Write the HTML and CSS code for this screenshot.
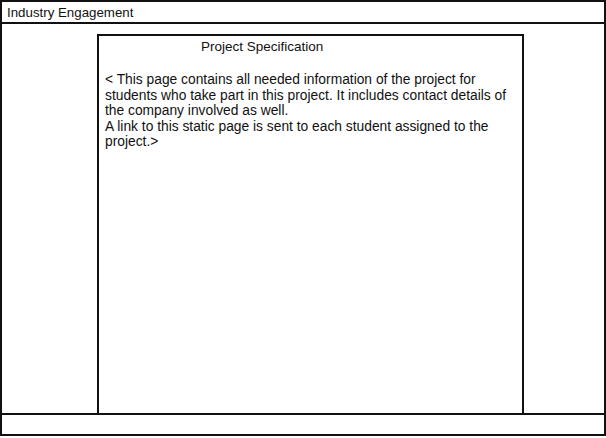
FILE: index.html
```html
<!DOCTYPE html>
<html>
<head>
<meta charset="utf-8">
<link rel="stylesheet" href="styles.css">
</head>
<body>
<div class="frame">
  <div class="header">Industry Engagement</div>
  <div class="main">
    <div class="panel">
      <div class="title">Project Specification</div>
      <p class="desc">&lt; This page contains all needed information of the project for students who take part in this project. It includes contact details of the company involved as well.<br>A link to this static page is sent to each student assigned to the project.&gt;</p>
    </div>
  </div>
  <div class="footer"></div>
</div>
</body>
</html>
```
FILE: styles.css
```css
html, body {
  margin: 0;
  padding: 0;
  background: #fff;
}
body {
  font-family: "Liberation Sans", Arial, sans-serif;
  font-size: 13.3px;
  color: #111;
}
.frame {
  box-sizing: border-box;
  width: 606px;
  height: 436px;
  border: 2px solid #111;
  display: flex;
  flex-direction: column;
}
.header {
  height: 20px;
  border-bottom: 2px solid #111;
  padding-left: 5px;
  line-height: 21px;
}
.main {
  flex: 1;
  display: flex;
  padding-top: 10px;
  padding-left: 95px;
}
.panel {
  box-sizing: border-box;
  width: 427px;
  border: 2px solid #111;
  border-bottom: none;
  padding: 3px 8px 0 6px;
}
.title {
  padding-left: 96px;
  line-height: 16px;
  font-size: 13.5px;
}
.desc {
  margin: 17px 0 0 0;
  line-height: 15.5px;
  width: 402px;
  font-size: 13.8px;
}
.footer {
  height: 19px;
  border-top: 2px solid #111;
}
```
